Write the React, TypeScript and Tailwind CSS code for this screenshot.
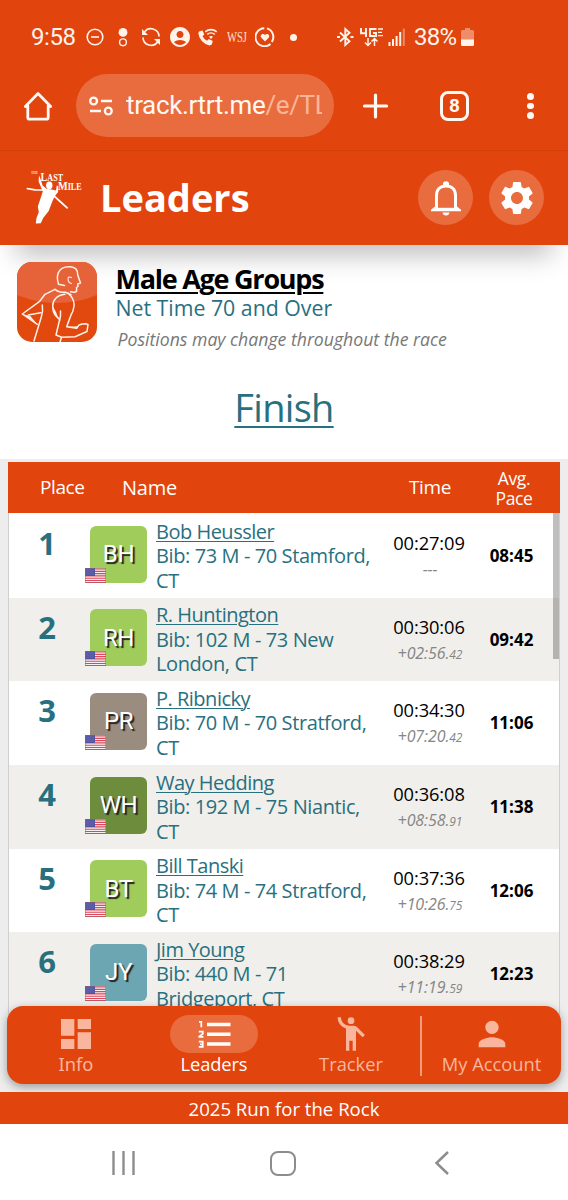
import React from "react";
import { MdAccountCircle, MdDashboard, MdEmojiPeople, MdPerson, MdSettings } from "react-icons/md";

type Runner = {
    place: number;
    initials: string;
    color: string;
    name: string;
    details: string[];
    time: string;
    gap?: string;
    fraction?: string;
    pace: string;
};

const runners: Runner[] = [
    { place: 1, initials: "BH", color: "bg-[#a0cc5b]", name: "Bob Heussler", details: ["Bib: 73 M - 70 Stamford,", "CT"], time: "00:27:09", pace: "08:45" },
    { place: 2, initials: "RH", color: "bg-[#a0cc5b]", name: "R. Huntington", details: ["Bib: 102 M - 73 New", "London, CT"], time: "00:30:06", gap: "+02:56.", fraction: "42", pace: "09:42" },
    { place: 3, initials: "PR", color: "bg-[#9b8c80]", name: "P. Ribnicky", details: ["Bib: 70 M - 70 Stratford,", "CT"], time: "00:34:30", gap: "+07:20.", fraction: "42", pace: "11:06" },
    { place: 4, initials: "WH", color: "bg-[#6d8c3c]", name: "Way Hedding", details: ["Bib: 192 M - 75 Niantic,", "CT"], time: "00:36:08", gap: "+08:58.", fraction: "91", pace: "11:38" },
    { place: 5, initials: "BT", color: "bg-[#a0cc5b]", name: "Bill Tanski", details: ["Bib: 74 M - 74 Stratford,", "CT"], time: "00:37:36", gap: "+10:26.", fraction: "75", pace: "12:06" },
    { place: 6, initials: "JY", color: "bg-[#6ba6b2]", name: "Jim Young", details: ["Bib: 440 M - 71", "Bridgeport, CT"], time: "00:38:29", gap: "+11:19.", fraction: "59", pace: "12:23" },
];

function StatusBar() {
    return (
        <div className="flex h-[74px] items-center pl-[31px] font-['Roboto',sans-serif] text-[#fff3ea]">
            <span className="w-[55px] text-[24px] tracking-[-0.4px]">9:58</span>
            <svg className="h-[18px] w-[18px]" viewBox="0 0 18 18" fill="none" stroke="currentColor" strokeWidth="1.6">
                <circle cx="9" cy="9" r="7.8" />
                <path d="M5 9h8" />
            </svg>
            <svg className="ml-[14px] h-5 w-[10px]" viewBox="0 0 10 20">
                <circle cx="5" cy="5.4" r="4.4" fill="currentColor" />
                <circle cx="5" cy="15.3" r="3.4" fill="none" stroke="currentColor" strokeWidth="1.4" />
            </svg>
            <svg className="ml-[13px] h-5 w-5" viewBox="0 0 20 20" fill="none" stroke="currentColor" strokeWidth="1.7">
                <path d="M3.2 5.5A8 8 0 0 1 18 9.5M16.8 14.500A8 8 0 0 1 2 10.5" />
                <path d="M1 2v6h6zM19 18v-6h-6z" fill="currentColor" stroke="none" />
            </svg>
            <MdAccountCircle className="ml-[7px] h-6 w-6" />
            <svg className="ml-[6px] h-5 w-5" viewBox="0 0 20 20" fill="none" stroke="currentColor">
                <path d="M1 4.500 4.500 3.500l1.800 4-1.800 1.800a12 12 0 0 0 4.500 4.500l1.800-1.700 4 1.900-1 3.500-2.300 1A14 14 0 0 1 .300 6z" fill="currentColor" stroke="none" />
                <path d="M7.300 4.800a8.500 8.500 0 0 1 11.400 0M9.300 7.400a5.500 5.500 0 0 1 7.400 0" strokeWidth="1.600" />
                <path d="M13 12 11 9.800q2-1.500 4 0z" fill="currentColor" stroke="none" />
            </svg>
            <span className="ml-[9px] w-5 origin-left scale-x-[0.68] font-['Liberation_Serif',serif] text-[15.500px] text-[#ffe3d2]">WSJ</span>
            <svg className="ml-[8px] h-5 w-5" viewBox="0 0 20 20">
                <path d="M12 1.400a9 9 0 0 1 4.800 13.600M15.500 16.900A9 9 0 1 1 9.300 1.200" fill="none" stroke="currentColor" strokeWidth="2" />
                <path d="M10 14.500 6.200 10.600C4.500 8.400 7.800 5.500 10 8c2.200-2.500 5.500.4 3.800 2.600z" fill="currentColor" />
            </svg>
            <span className="ml-[15px] h-[7px] w-[7px] rounded-full bg-[#fff3ea]" />
            <svg className="ml-[39px] h-5 w-[18px]" viewBox="0 0 18 20" fill="none" stroke="currentColor" strokeWidth="1.9">
                <path d="m4 5.500 9.500 8.800L9.300 18V2l4.200 3.700L4 14.500" />
                <path d="M1 10h3M14.500 10h3" />
            </svg>
            <svg className="ml-[5px] h-5 w-[25px]" viewBox="0 0 25 20" fill="none" stroke="currentColor" strokeWidth="1.9">
                <path d="M2 1v5.300h6M7 1v9M17.500 2H11v7h6V6h-3" />
                <path d="M19 2h5M19 5.300h4M19 8.600h5" strokeWidth="1.300" />
                <path d="M9 11v7M6 15.500l3 3 3-3M15.500 19v-7M12.500 14.500l3-3 3 3" strokeWidth="1.500" />
            </svg>
            <svg className="ml-[4px] h-5 w-[18px]" viewBox="0 0 18 20" fill="currentColor">
                <path d="M.5 15h2v4h-2zM4 12h2v7H4zM7.600 9h2v10h-2zM11.200 5h2v14h-2z" />
                <path d="M14.800 1.500h2V19h-2z" opacity=".4" />
            </svg>
            <span className="ml-[8px] w-[47px] text-[24px] tracking-[-0.7px]">38%</span>
            <svg className="h-5 w-[13px]" viewBox="0 0 13 20" fill="currentColor">
                <path d="M4 1h5v2h2.500Q13 3 13 4.500V13H0V4.500Q0 3 1.500 3H4z" opacity=".42" />
                <path d="M0 12.500h13v5q0 1.500-1.500 1.500h-10Q0 19 0 17.500z" />
            </svg>
        </div>
    );
}

function BrowserBar() {
    return (
        <div className="flex h-[76px] items-start font-['Roboto',sans-serif] text-[#fff8f3]">
            <svg className="mt-[17px] ml-[23px] h-[30px] w-[30px]" viewBox="0 0 30 30" fill="none" stroke="currentColor" strokeWidth="2.800" strokeLinejoin="round" strokeLinecap="round">
                <path d="M2.300 15.500 15 2.500l12.700 13M4.800 15v11.500q0 1.700 1.700 1.700h17q1.700 0 1.700-1.700V15" />
            </svg>
            <div className="ml-[23px] flex h-[63px] w-[258px] items-center overflow-hidden rounded-full bg-[#e96c3f]">
                <svg className="ml-[13px] h-6 w-6 shrink-0" viewBox="0 0 24 24" fill="none" stroke="currentColor" strokeWidth="2.400">
                    <circle cx="4.600" cy="7" r="3.400" />
                    <path d="M12 7h11M1 17h11" />
                    <circle cx="19.300" cy="17" r="3.400" />
                </svg>
                <div className="ml-[13px] w-[196px] overflow-hidden text-[26px] tracking-[-0.35px] whitespace-nowrap">
                    track.rtrt.me<span className="text-[#f9b798]">/e/TL</span>
                </div>
            </div>
            <svg className="mt-[19px] ml-[28px] h-[26px] w-[26px]" viewBox="0 0 26 26" stroke="currentColor" strokeWidth="3.200" strokeLinecap="round">
                <path d="M13.500 2v22M2.500 13h22" />
            </svg>
            <div className="mt-[17px] ml-[52px] flex h-[30px] w-[29px] items-center justify-center rounded-[8px] border-[3px] border-[#fff8f3] text-[19px] font-bold">8</div>
            <div className="mt-[19px] ml-[58px] flex flex-col gap-[3px]">
                <span className="h-[6.500px] w-[6.500px] rounded-full bg-[#fff8f3]" />
                <span className="h-[6.500px] w-[6.500px] rounded-full bg-[#fff8f3]" />
                <span className="h-[6.500px] w-[6.500px] rounded-full bg-[#fff8f3]" />
            </div>
        </div>
    );
}

function LastMileLogo() {
    return (
        <svg className="h-[56px] w-[58px]" viewBox="0 0 58 56" fill="#fff">
            <g className="font-['Liberation_Serif',serif]" fontWeight="bold">
                <text x="5" y="3.500" fontSize="4" textLength="7" lengthAdjust="spacingAndGlyphs" opacity=".8">THE</text>
                <text x="14.500" y="11.300" fontSize="12.500" textLength="22.500" lengthAdjust="spacingAndGlyphs">L<tspan fontSize="9.800">AST</tspan></text>
                <text x="32" y="20.300" fontSize="12.500" textLength="23.500" lengthAdjust="spacingAndGlyphs">M<tspan fontSize="9.800">ILE</tspan></text>
            </g>
            <ellipse cx="23.300" cy="15.300" rx="3.200" ry="3.900" />
            <path d="M13 5.500 14.500 9l2.100 6.500 4 3.300 5 .7 4.400 1 .8-5 1.500 1-.2 5.500-3.200 4L26.500 31l-3.800 10-5.500 7-2.400 5.300-5 .2.700-5.500 2.300-6-1-5.500L15 27l1.800-5.500-.8-2-3.400-8z" />
            <path d="M.7 18.500 9 19.800l8.500.2M27 25l14.700 13.300" fill="none" stroke="#fff" strokeWidth="1.700" />
        </svg>
    );
}

function AppHeader() {
    return (
        <header className="flex h-[95px] items-center border-t border-[#d53f0a] pr-[24px] pl-[26px] text-white">
            <LastMileLogo />
            <h1 className="-mt-[3px] ml-[16px] flex-1 text-[38px] leading-none font-bold">Leaders</h1>
            <button className="-mt-px flex h-[55px] w-[55px] items-center justify-center rounded-full bg-[#e96c3f]">
                <svg className="h-9 w-[30px]" viewBox="0 0 30 36" fill="none" stroke="currentColor" strokeWidth="3">
                    <path d="M5.500 29V15.500C5.500 9.500 9 6 15 6s9.500 3.500 9.500 9.500V29" />
                    <path d="M0 31.200v-1.400L4 26.500h22l4 3.300v1.400z" fill="currentColor" stroke="none" />
                    <path d="M7 26h16v1.800H7z" fill="#e96c3f" stroke="none" />
                    <path d="M12 5.500V4q0-2.700 3-2.700T18 4v1.500zM11.500 32.500h7Q18 35.500 15 35.500t-3.500-3z" fill="currentColor" stroke="none" />
                </svg>
            </button>
            <button className="-mt-px ml-[16px] flex h-[55px] w-[55px] items-center justify-center rounded-full bg-[#e96c3f]">
                <MdSettings className="h-10 w-10" />
            </button>
        </header>
    );
}

function RunnerIcon() {
    return (
        <svg className="h-20 w-20" viewBox="0 0 80 80">
            <defs>
                <clipPath id="tile"><rect width="80" height="80" rx="15" /></clipPath>
            </defs>
            <g clipPath="url(#tile)">
                <rect width="80" height="80" fill="#e1490f" />
                <path d="M0 0h80v33Q60 41 40 41T0 33z" fill="#e66238" />
                <g fill="none" stroke="#fff0e8" strokeWidth="1.500" strokeLinejoin="round" strokeLinecap="round">
                    {/* head */}
                    <path d="M47.500 23.500 41.500 22.300C40 17 40 13 41.500 10.500 43.500 6 48 4.500 53 4.700c5 .3 8 3.300 7.700 8.300l2.800 8-2.800 1 .3 2.500-1.500 1 .2 3.500q-1.200 2-6.200.8" />
                    <path d="M54.500 15.500q-3.800-1.500-3.500 1.500.2 4 3.500 4.500" strokeWidth="1.100" />
                    {/* collar, back and rear arm */}
                    <path d="M38 27.300q4 3.200 10.500 3l5.500 2.500M38 27.300 28 32.300 22.300 39.700 5.300 52l15 10.300M11.300 53l12.400-2.300M25.300 43q1 6-1 12L17 79" />
                    {/* front arm */}
                    <path d="M48 32.300C40 33 35.700 38 35.700 44q0 6 2.800 9.500L43 58M51.300 31.300q6.500 6 5.700 12.700-.5 5-3 9l-4.300 11.700 10 1.600 2-3 3.300-1.300 4-.2 2 .7-1 7L58 74.700l-13.300.6L39 73M43.500 49v5l-4.500 19M44.500 75.500 43 80" />
                </g>
                <path d="M5.300 52l15 10.300-7-8.300zM35.700 44q0 8 7.300 14-3-4-4-8zM49.700 64.700l10 1.600 1.500-2-5 .2z" fill="#fff0e8" />
            </g>
        </svg>
    );
}

function Flag() {
    return (
        <svg className="absolute top-[42px] -left-[5px] h-[15px] w-[21px]" viewBox="0 0 21 15">
            <rect width="21" height="15" fill="#f7eef0" />
            <path d="M0 1h21M0 3.300h21M0 5.600h21M0 7.900h21M0 10.200h21M0 12.500h21M0 14.600h21" stroke="#d94a5c" strokeWidth="1.150" />
            <rect width="10" height="8" fill="#5053a0" />
            <path d="M1.500 2h8M1.500 4h8M1.500 6h8" stroke="#8587c4" strokeWidth=".8" strokeDasharray="1 1" />
            <rect x=".25" y=".25" width="20.500" height="14.500" fill="none" stroke="#a0676f" strokeWidth=".5" />
        </svg>
    );
}

function RunnerRow({ runner }: { runner: Runner }) {
    return (
        <div className="flex h-[83.700px] even:bg-[#f0efeb]">
            <div className="w-[81px] pt-[7px] pr-[5px] text-center text-[31px] leading-[44px] font-bold text-[#28707f]">{runner.place}</div>
            <div className={`relative mt-[11.500px] flex h-[57px] w-[57px] shrink-0 items-center justify-center rounded-[6px] font-['Roboto',sans-serif] text-[24px] tracking-[-0.4px] text-white [text-shadow:2px_2px_1px_#222] ${runner.color}`}>
                {runner.initials}
                <Flag />
            </div>
            <div className="ml-[9px] w-[228px] pt-[5.500px] text-[20px] leading-[24.500px] tracking-[-0.4px] whitespace-nowrap text-[#28707f]">
                <div className="tracking-[-0.500px] underline decoration-1 underline-offset-2">{runner.name}</div>
                {runner.details.map((line) => (
                    <div key={line}>{line}</div>
                ))}
            </div>
            <div className="w-[90px] pt-[15px] text-center">
                <div className="text-[18.300px] leading-[28px] tracking-[-0.1px] text-black">{runner.time}</div>
                <div className="pl-[2px] text-[16px] leading-[25px] tracking-[-0.1px] text-[#858585] italic">
                    {runner.gap ?? "---"}
                    <span className="text-[12px]">{runner.fraction}</span>
                </div>
            </div>
            <div className="w-[75px] text-center text-[17px] leading-[83px] font-bold text-black">{runner.pace}</div>
        </div>
    );
}

function LeaderTable() {
    return (
        <div className="mx-2 h-[630px] overflow-hidden">
            <div className="flex h-[51px] items-center bg-[#e1440d] text-white">
                <span className="w-[114px] pl-[32px] text-[19px] tracking-[-0.4px]">Place</span>
                <span className="w-[262px] text-[20px] tracking-[-0.2px]">Name</span>
                <span className="w-[92px] text-center text-[19px] tracking-[-0.4px]">Time</span>
                <span className="w-[76px] text-center text-[17.500px] leading-[20px] tracking-[-0.4px]">Avg.<br />Pace</span>
            </div>
            <div className="relative border-x border-[#cfcfcf] bg-white pt-px">
                {runners.map((runner) => (
                    <RunnerRow key={runner.place} runner={runner} />
                ))}
                <div className="absolute top-0 right-0 h-[146px] w-[6px] bg-black/25" />
            </div>
        </div>
    );
}

function RankedList() {
    return (
        <svg className="h-[28px] w-[33px]" viewBox="0 0 33 28" fill="none" stroke="currentColor">
            <path d="M9 4.500h23.500M9 14.300h23.500M9 24h23.500" strokeWidth="3.400" />
            <path d="M1 1.800h2.300v5.500M.8 11.700h4v2.200L1.200 16.500v.3h4.200M.8 21.700h4v5.200h-4M2 24.300h2.500" strokeWidth="1.700" />
        </svg>
    );
}

function BottomNav() {
    return (
        <nav className="absolute right-[7px] bottom-[8px] left-[7px] flex h-[78px] rounded-[16px] bg-[#e1440d] pt-[9px] text-[18.300px] leading-[24px] text-[#f9b69c] shadow-[0_3px_10px_rgba(0,0,0,0.35)]">
            <div className="flex w-[138px] flex-col items-center">
                <MdDashboard className="-mt-px mb-[-1px] h-[40px] w-[40px]" />
                <span className="-mt-px font-['Noto_Sans',sans-serif]">Info</span>
            </div>
            <div className="flex w-[138px] flex-col items-center tracking-[-0.1px] text-white">
                <span className="mb-[-1px] flex h-[38px] w-[88px] items-center justify-center rounded-full bg-[#e96c3f]">
                    <RankedList />
                </span>
                Leaders
            </div>
            <div className="flex w-[136px] flex-col items-center">
                <MdEmojiPeople className="-mt-px h-[40px] w-[40px]" />
                <span className="-mt-[2px]">Tracker</span>
            </div>
            <div className="mt-px ml-px h-[60px] w-[2px] bg-[#f19c7b]" />
            <div className="flex w-[139px] flex-col items-center">
                <MdPerson className="-mt-px mb-[-1px] h-[40px] w-[40px]" />
                <span className="-mt-px">My Account</span>
            </div>
        </nav>
    );
}

export default function App() {
    return (
        <div className="h-[1200px] w-[568px] overflow-hidden bg-white font-['Open_Sans','Noto_Sans',sans-serif]">
            <div className="bg-[#e1440d]">
                <StatusBar />
                <BrowserBar />
                <AppHeader />
            </div>
            <section className="h-[214px] overflow-hidden">
                <div className="mx-5 -mt-5 h-5 shadow-[0_4px_28px_4px_rgba(0,0,0,0.3)]" />
                <div className="relative flex pt-[17px] pl-[17px]">
                    <RunnerIcon />
                    <div className="ml-[18.500px]">
                        <h2 className="text-[27px] leading-[34px] font-bold tracking-[-1.250px] text-black underline decoration-2 underline-offset-3">Male Age Groups</h2>
                        <p className="text-[21.300px] leading-[24px] text-[#28707f]">Net Time 70 and Over</p>
                        <p className="mt-[8px] ml-[2px] text-[17.650px] leading-[23px] text-[#777] italic">Positions may change throughout the race</p>
                    </div>
                </div>
                <div className="mt-[31px] text-center text-[38px] leading-[50px] tracking-[-0.700px] text-[#28707f] underline decoration-2 underline-offset-4">Finish</div>
            </section>
            <main className="relative h-[633px] overflow-hidden bg-[#ededed] pt-[3px]">
                <LeaderTable />
                <BottomNav />
            </main>
            <footer className="h-[32px] bg-[#e1440d] text-center text-[18.600px] leading-[33px] text-white">2025 Run for the Rock</footer>
            <div className="flex h-[76px] items-center pt-[2px] text-[#8d8d8d]">
                <svg className="ml-[111px] h-[26px] w-[26px]" viewBox="0 0 26 26" stroke="currentColor" strokeWidth="2.400">
                    <path d="M2.500 1v24M12.500 1v24M22.500 1v24" />
                </svg>
                <span className="ml-[133px] h-[25px] w-[26px] rounded-[8px] border-[2.500px] border-[#8d8d8d]" />
                <svg className="ml-[138px] h-[26px] w-[16px]" viewBox="0 0 16 26" fill="none" stroke="currentColor" strokeWidth="2.500">
                    <path d="M14 2 2.500 13 14 24" />
                </svg>
            </div>
        </div>
    );
}
